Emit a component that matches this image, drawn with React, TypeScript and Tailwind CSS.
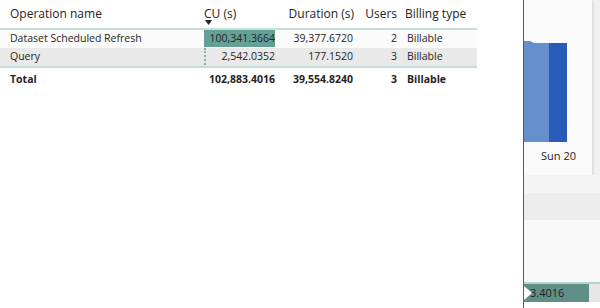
import React from "react";

const font = { fontFamily: '"Open Sans", "Noto Sans", sans-serif' };

type Row = {
  name: string;
  cu: string;
  cuPct: number;
  duration: string;
  users: string;
  billing: string;
  shaded?: boolean;
};

const rows: Row[] = [
  {
    name: "Dataset Scheduled Refresh",
    cu: "100,341.3664",
    cuPct: 100,
    duration: "39,377.6720",
    users: "2",
    billing: "Billable",
  },
  {
    name: "Query",
    cu: "2,542.0352",
    cuPct: 2.5,
    duration: "177.1520",
    users: "3",
    billing: "Billable",
    shaded: true,
  },
];

function TableVisual() {
  return (
    <div className="w-[477px] text-[#252423]">
      {/* header */}
      <div className="flex h-[30px] border-b-2 border-[#c4ded8] text-[12px]">
        <div className="w-[202px] pl-[10px] pt-[5px]">Operation name</div>
        <div className="relative w-[75px] pl-[2px] pt-[5px]">
          CU (s)
          <svg
            className="absolute left-[3px] top-[20px]"
            width="7"
            height="5"
            viewBox="0 0 7 5"
          >
            <path d="M0 0 L7 0 L3.5 5 Z" fill="#252423" />
          </svg>
        </div>
        <div className="w-[78px] pr-[1px] pt-[5px] text-right">Duration (s)</div>
        <div className="w-[42px] pt-[5px] text-right">Users</div>
        <div className="flex-1 pl-[8px] pt-[5px]">Billing type</div>
      </div>
      {/* body */}
      {rows.map((r, i) => (
        <div
          key={r.name}
          className={
            "flex items-center text-[10.5px] " +
            (r.shaded ? "bg-[#e9e9e9] " : "bg-[#fbfbfb] ") +
            (i === rows.length - 1 ? "h-[20px] border-b-2 border-[#c4ded8]" : "h-[18px]")
          }
        >
          <div className="w-[202px] pl-[10px]">{r.name}</div>
          <div className="relative flex h-full w-[75px] items-center justify-end pr-[2px]">
            <div className="absolute left-[2px] top-[0px] bottom-[1px] right-[2px]">
              {r.cuPct > 5 ? (
                <div
                  className="h-full bg-[#65a097]"
                  style={{ width: `${r.cuPct}%` }}
                />
              ) : (
                <div className="h-full w-[2px] border-l-2 border-dotted border-[#7fb2a8]" />
              )}
            </div>
            <span className="relative">{r.cu}</span>
          </div>
          <div className="w-[78px] pr-[2px] text-right">{r.duration}</div>
          <div className="w-[42px] text-right">{r.users}</div>
          <div className="flex-1 pl-[10px]">{r.billing}</div>
        </div>
      ))}
      {/* total */}
      <div className="flex h-[22px] items-center pt-[1px] text-[10.5px] font-bold">
        <div className="w-[202px] pl-[10px]">Total</div>
        <div className="w-[75px] pr-[2px] text-right">102,883.4016</div>
        <div className="w-[78px] pr-[2px] text-right">39,554.8240</div>
        <div className="w-[42px] text-right">3</div>
        <div className="flex-1 pl-[10px]">Billable</div>
      </div>
    </div>
  );
}

function CanvasBehind() {
  return (
    <div className="flex h-full flex-1 flex-col bg-[#f1f1f1]">
      {/* chart card */}
      <div className="flex h-[175px] w-[68px] flex-col bg-[#fafafa] shadow-[1px_1px_3px_rgba(0,0,0,0.12)]">
        <div className="h-[41px]" />
        <svg width="43" height="101" viewBox="0 0 43 101" className="block">
          <path d="M0 0 L6 0 L10 2 L25 2 L25 101 L0 101 Z" fill="#6590cc" />
          <rect x="25" y="2" width="18" height="99" fill="#285cb8" />
        </svg>
        <div className="pl-[17px] pt-[6px] text-[11px] text-[#252423]" style={font}>
          Sun 20
        </div>
      </div>
      <div className="h-[18px] bg-[#f4f4f4]" />
      <div className="h-[27px] bg-[#ededed]" />
      <div className="h-[62px] bg-[#f8f8f8]" />
      <div className="h-[2px] bg-[#b6d4cd]" />
      <div className="flex h-[18px]">
        <div className="relative flex w-[65px] items-center overflow-hidden bg-[#5f8f87] pl-[6px] text-[11px] text-[#1f1f1f]">
          <span>3.4016</span>
          <svg
            className="absolute left-0 top-[2px]"
            width="8"
            height="14"
            viewBox="0 0 8 14"
          >
            <path d="M0 0 L8 7 L0 14 Z" fill="#ffffff" />
          </svg>
        </div>
        <div className="flex-1 bg-[#e6e6e6]" />
      </div>
      <div className="flex-1 bg-white" />
    </div>
  );
}

export default function App() {
  return (
    <div className="flex h-[308px] w-[600px] overflow-hidden bg-white" style={font}>
      <div className="h-full w-[523px] bg-white">
        <TableVisual />
      </div>
      <div className="h-full w-[1px] bg-[#5c5c5c]" />
      <CanvasBehind />
    </div>
  );
}
